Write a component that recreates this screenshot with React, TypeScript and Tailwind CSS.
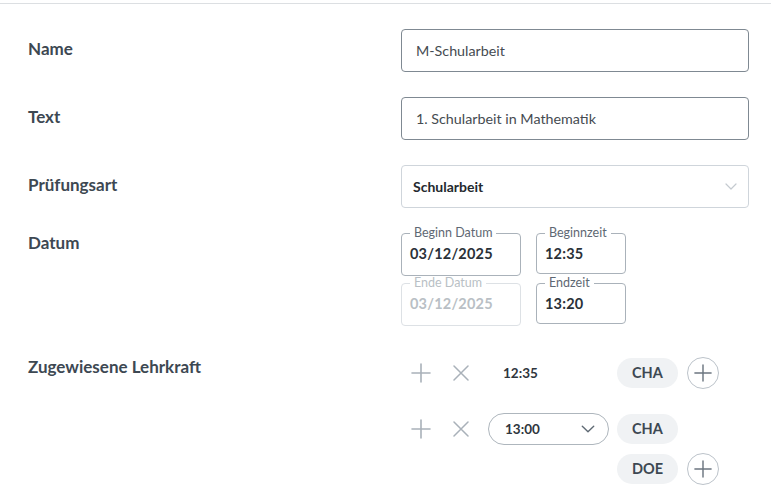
import { ReactNode } from "react";

const font = { fontFamily: "Lato, 'Open Sans', sans-serif" };

function Label({ children, className = "" }: { children: ReactNode; className?: string }) {
  return (
    <div className={`w-[401px] shrink-0 pl-[28px] text-[17px] font-bold leading-[20px] text-[#3d4852] ${className}`}>
      {children}
    </div>
  );
}

function PlusIcon({ size = 20, color = "#a9b1b9" }: { size?: number; color?: string }) {
  return (
    <svg width={size} height={size} viewBox="0 0 20 20" fill="none" stroke={color} strokeWidth="1.6" strokeLinecap="round">
      <path d="M10 1v18M1 10h18" />
    </svg>
  );
}

function XIcon() {
  return (
    <svg width="16" height="16" viewBox="0 0 16 16" fill="none" stroke="#a9b1b9" strokeWidth="1.5" strokeLinecap="round">
      <path d="M1 1l14 14M15 1L1 15" />
    </svg>
  );
}

function Chevron({ color = "#c4cad0", w = 12 }: { color?: string; w?: number }) {
  return (
    <svg width={w} height={w / 2 + 1} viewBox="0 0 12 7" fill="none" stroke={color} strokeWidth="1.2" strokeLinecap="round" strokeLinejoin="round">
      <path d="M1 1l5 5 5-5" />
    </svg>
  );
}

function DateField({
  legend,
  value,
  width,
  height,
  disabled = false,
}: {
  legend: string;
  value: string;
  width: string;
  height: string;
  disabled?: boolean;
}) {
  return (
    <fieldset
      className={`m-0 rounded-[4px] border px-[8px] ${width} ${height} ${
        disabled ? "border-[#dde1e5]" : "border-[#aab2ba]"
      }`}
    >
      <legend
        className={`px-[4px] text-[12.5px] leading-[14px] ${disabled ? "text-[#b9bfc5]" : "text-[#5e6873]"}`}
      >
        {legend}
      </legend>
      <div
        className={`mt-[5px] text-[14.5px] font-bold leading-[18px] tracking-[0.2px] ${
          disabled ? "text-[#b9bfc5]" : "text-[#2a3138]"
        }`}
      >
        {value}
      </div>
    </fieldset>
  );
}

function Pill({ children }: { children: ReactNode }) {
  return (
    <div className="flex h-[30px] items-center rounded-full bg-[#f0f2f4] px-[15px] text-[14.5px] font-bold text-[#3d4852]">
      {children}
    </div>
  );
}

function AddCircle() {
  return (
    <button className="flex h-[32px] w-[32px] items-center justify-center rounded-full border border-[#bcc3ca] bg-white">
      <PlusIcon size={18} color="#6c7680" />
    </button>
  );
}

export default function App() {
  return (
    <div className="h-[500px] w-[771px] overflow-hidden bg-white pt-[3px]" style={font}>
      <div className="border-t border-[#dcdfe2]" />

      <div className="mt-[25px] flex items-center">
        <Label className="-mt-[4px]">Name</Label>
        <div className="flex h-[43px] w-[348px] items-center rounded-[4px] border border-[#7f8992] px-[14px] text-[14.3px] text-[#454b51]">
          M-Schularbeit
        </div>
      </div>

      <div className="mt-[25px] flex items-center">
        <Label className="-mt-[4px]">Text</Label>
        <div className="flex h-[43px] w-[348px] items-center rounded-[4px] border border-[#7f8992] px-[14px] text-[14.3px] text-[#454b51]">
          1. Schularbeit in Mathematik
        </div>
      </div>

      <div className="mt-[25px] flex items-center">
        <Label className="-mt-[4px]">Prüfungsart</Label>
        <div className="flex h-[43px] w-[348px] items-center justify-between rounded-[4px] border border-[#cfd5db] pl-[11px] pr-[11px] text-[14px] font-bold text-[#24292e]">
          <span>Schularbeit</span>
          <Chevron />
        </div>
      </div>

      <div className="mt-[18px] flex items-start">
        <Label className="mt-[7px]">Datum</Label>
        <div className="flex flex-col">
          <div className="flex gap-[15px]">
            <DateField legend="Beginn Datum" value="03/12/2025" width="w-[120px]" height="h-[50px]" />
            <DateField legend="Beginnzeit" value="12:35" width="w-[90px]" height="h-[48px]" />
          </div>
          <div className="flex gap-[15px]">
            <DateField legend="Ende Datum" value="03/12/2025" width="w-[120px]" height="h-[50px]" disabled />
            <DateField legend="Endzeit" value="13:20" width="w-[90px]" height="h-[48px]" />
          </div>
        </div>
      </div>

      <div className="mt-[31px] flex items-start">
        <Label>Zugewiesene Lehrkraft</Label>
        <div className="flex flex-col gap-[24px]">
          <div className="flex items-start">
            <div className="flex h-[32px] w-[40px] items-center justify-center">
              <PlusIcon />
            </div>
            <div className="flex h-[32px] w-[40px] items-center justify-center">
              <XIcon />
            </div>
            <div className="ml-[7px] flex h-[32px] w-[121px] items-center pl-[15px] text-[13.5px] font-bold text-[#2f363d]">
              12:35
            </div>
            <div className="ml-[8px] flex flex-col gap-[8px]">
              <div className="flex h-[32px] items-center gap-[9px]">
                <Pill>CHA</Pill>
                <AddCircle />
              </div>
            </div>
          </div>

          <div className="flex items-start">
            <div className="flex h-[32px] w-[40px] items-center justify-center">
              <PlusIcon />
            </div>
            <div className="flex h-[32px] w-[40px] items-center justify-center">
              <XIcon />
            </div>
            <div className="ml-[7px] flex h-[32px] w-[121px] items-center justify-between rounded-full border border-[#aeb6bd] pl-[16px] pr-[13px] text-[13.5px] font-bold text-[#2f363d]">
              <span>13:00</span>
              <Chevron color="#5f6a74" w={14} />
            </div>
            <div className="ml-[8px] flex flex-col gap-[8px]">
              <div className="flex h-[32px] items-center">
                <Pill>CHA</Pill>
              </div>
              <div className="flex h-[32px] items-center gap-[9px]">
                <Pill>DOE</Pill>
                <AddCircle />
              </div>
            </div>
          </div>
        </div>
      </div>
    </div>
  );
}
